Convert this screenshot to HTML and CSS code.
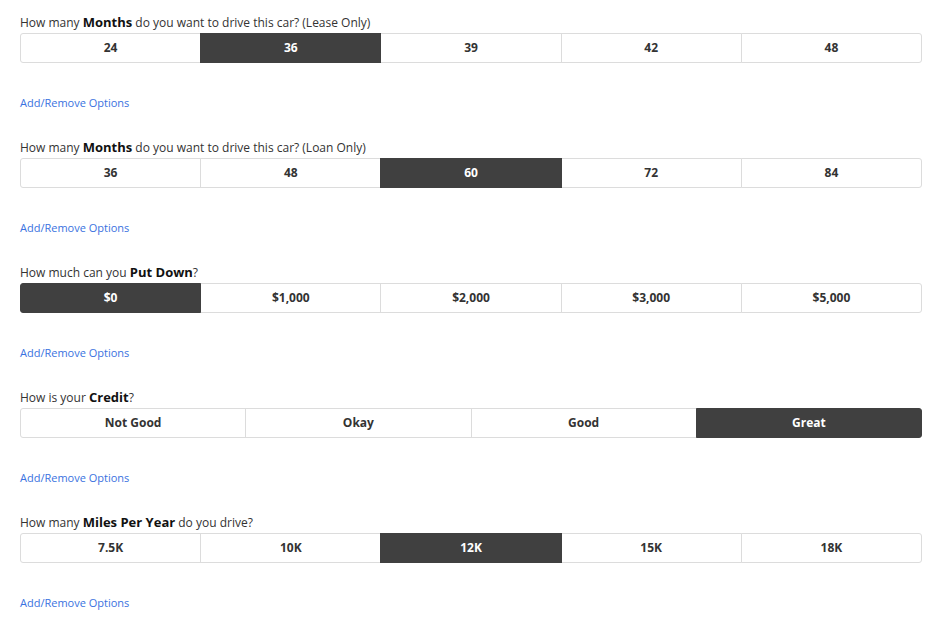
FILE: index.html
```html
<!DOCTYPE html>
<html lang="en">
<head>
    <meta charset="UTF-8">
    <title>Payment Options</title>
    <link rel="stylesheet" href="styles.css">
</head>
<body>
    <div class="page">
        <div class="question">
            <p class="label">How many <b>Months</b> do you want to drive this car? (Lease Only)</p>
            <div class="choices">
                <span class="choice">24</span>
                <span class="choice active">36</span>
                <span class="choice">39</span>
                <span class="choice">42</span>
                <span class="choice">48</span>
            </div>
            <a class="edit-link" href="#">Add/Remove Options</a>
        </div>

        <div class="question">
            <p class="label">How many <b>Months</b> do you want to drive this car? (Loan Only)</p>
            <div class="choices">
                <span class="choice">36</span>
                <span class="choice">48</span>
                <span class="choice active">60</span>
                <span class="choice">72</span>
                <span class="choice">84</span>
            </div>
            <a class="edit-link" href="#">Add/Remove Options</a>
        </div>

        <div class="question">
            <p class="label">How much can you <b>Put Down</b>?</p>
            <div class="choices">
                <span class="choice active">$0</span>
                <span class="choice">$1,000</span>
                <span class="choice">$2,000</span>
                <span class="choice">$3,000</span>
                <span class="choice">$5,000</span>
            </div>
            <a class="edit-link" href="#">Add/Remove Options</a>
        </div>

        <div class="question">
            <p class="label">How is your <b>Credit</b>?</p>
            <div class="choices">
                <span class="choice">Not Good</span>
                <span class="choice">Okay</span>
                <span class="choice">Good</span>
                <span class="choice active">Great</span>
            </div>
            <a class="edit-link" href="#">Add/Remove Options</a>
        </div>

        <div class="question">
            <p class="label">How many <b>Miles Per Year</b> do you drive?</p>
            <div class="choices">
                <span class="choice">7.5K</span>
                <span class="choice">10K</span>
                <span class="choice active">12K</span>
                <span class="choice">15K</span>
                <span class="choice">18K</span>
            </div>
            <a class="edit-link" href="#">Add/Remove Options</a>
        </div>
    </div>
</body>
</html>
```

FILE: styles.css
```css
/* Page */
body {
    margin: 0;
    font-family: "Open Sans", Arial, sans-serif;
    color: #222;
    background: #fff;
}
.page {
    padding: 15px 27px 0 20px;
}

/* Question block */
.question {
    display: flex;
    flex-direction: column;
    align-items: flex-start;
    margin-bottom: 30px;
}
.label {
    margin: 0 0 2px;
    height: 16px;
    font-size: 12px;
    line-height: 16px;
    color: #333;
}
.label b {
    font-size: 13px;
    line-height: 1;
    font-weight: 700;
    color: #111;
}

/* Choice buttons */
.choices {
    display: flex;
    width: 100%;
    padding-left: 1px;
    box-sizing: border-box;
}
.choice {
    flex: 1;
    position: relative;
    height: 30px;
    padding-bottom: 1px;
    margin-left: -1px;
    box-sizing: border-box;
    border: 1px solid #dcdcdc;
    display: flex;
    align-items: center;
    justify-content: center;
    font-size: 12px;
    font-weight: 700;
    color: #333;
    background: #fff;
    cursor: pointer;
}
.choice:first-child {
    border-radius: 3px 0 0 3px;
}
.choice:last-child {
    border-radius: 0 3px 3px 0;
}
.choice.active {
    background: #404040;
    border-color: #404040;
    color: #fff;
    z-index: 1;
}

/* Link */
.edit-link {
    margin-top: 33px;
    font-size: 11px;
    line-height: 14px;
    color: #3a72e0;
    text-decoration: none;
}
```
